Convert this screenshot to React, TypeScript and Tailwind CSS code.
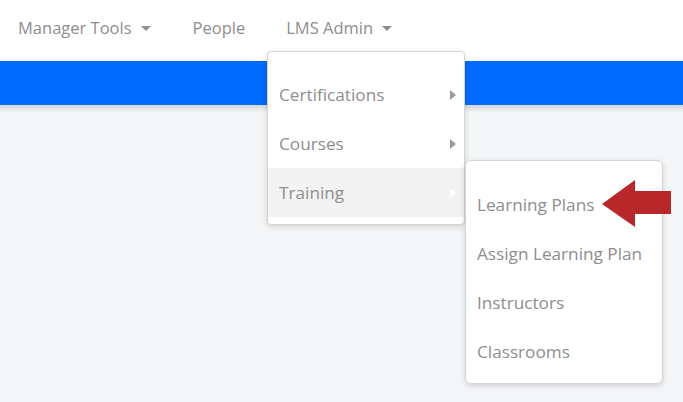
import React from 'react'

const font = { fontFamily: '"Open Sans", "Liberation Sans", sans-serif' }

const Caret = () => (
    <span className="ml-[9px] inline-block h-0 w-0 border-x-[5px] border-t-[5px] border-x-transparent border-t-[#8f8f8f] align-middle" />
)

const SubArrow = ({ light }: { light?: boolean }) => (
    <span className={`inline-block h-0 w-0 border-y-[5.5px] border-l-[6px] border-y-transparent ${light ? 'border-l-white' : 'border-l-[#9a9a9a]'}`} />
)

const Item = ({ label, sub, active }: { label: string; sub?: boolean; active?: boolean }) => (
    <div className={`flex h-[49px] items-center justify-between pl-[11px] pr-[8px] ${active ? 'bg-[#f3f3f3]' : ''}`}>
        <span>{label}</span>
        {sub && <SubArrow light={active} />}
    </div>
)

export default function App() {
    return (
        <div className="relative h-[402px] w-[683px] overflow-hidden bg-[#f5f6f8] text-[16.5px] text-[#8e8e8e]" style={font}>
            {/* top nav */}
            <div className="flex h-[61px] items-center bg-white pl-[18px] pb-[5px]">
                <div className="flex items-center">Manager Tools<Caret /></div>
                <div className="ml-[42px]">People</div>
                <div className="ml-[41px] flex items-center">LMS Admin<Caret /></div>
            </div>
            <div className="h-[44px] bg-[#006bff]" />
            <div className="h-[8px] bg-gradient-to-b from-[#d6d7d9] to-[#f5f6f8]" />

            {/* LMS Admin dropdown */}
            <div className="absolute left-[267px] top-[51px] w-[198px] rounded-[4px] border border-[#d4d4d4] bg-white pt-[18px] pb-[7px] text-[17.2px] shadow-[0_2px_6px_rgba(0,0,0,0.15)]">
                <Item label="Certifications" sub />
                <Item label="Courses" sub />
                <Item label="Training" sub active />
            </div>

            {/* Training submenu */}
            <div className="absolute left-[465px] top-[160px] w-[198px] rounded-[6px] border border-[#d4d4d4] bg-white pt-[19px] pb-[7px] text-[17.2px] shadow-[0_2px_6px_rgba(0,0,0,0.15)]">
                <Item label="Learning Plans" />
                <Item label="Assign Learning Plan" />
                <Item label="Instructors" />
                <Item label="Classrooms" />
            </div>

            {/* callout arrow */}
            <svg className="absolute left-[601px] top-[179px]" width="71" height="49" viewBox="0 0 71 49">
                <path d="M1 25 L34 1 L34 12 L70 12 L70 35 L34 35 L34 48 Z" fill="#b8282a" />
            </svg>
        </div>
    )
}
